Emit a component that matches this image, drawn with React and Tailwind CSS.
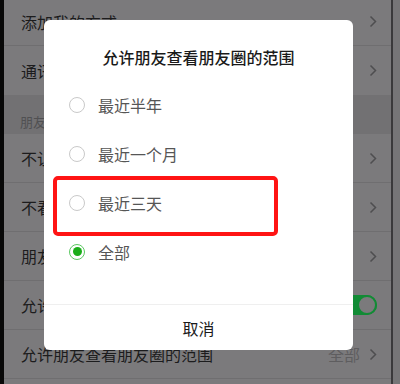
import React from "react";

const Chevron = () => (
  <svg width="8" height="13" viewBox="0 0 8 13" className="shrink-0">
    <polyline points="1.5,1.5 6.5,6.5 1.5,11.5" fill="none" stroke="#4e4e50" strokeWidth="1.5" />
  </svg>
);

const Row = ({ label, right, h = "h-[49px]", border = true }) => (
  <div className={`${h} flex items-center justify-between pl-[17px] pr-[14px] ${border ? "border-b border-[#6f6e70]" : ""}`}>
    <span className="text-[16px] text-[#1c1c1d] leading-none">{label}</span>
    {right}
  </div>
);

const Radio = ({ checked }) =>
  checked ? (
    <span className="w-[16px] h-[16px] rounded-full border-[1.5px] border-[#5cc862] flex items-center justify-center shrink-0">
      <span className="w-[9px] h-[9px] rounded-full bg-[#1aad19]" />
    </span>
  ) : (
    <span className="w-[16px] h-[16px] rounded-full border-[1.5px] border-[#c9c9c9] shrink-0" />
  );

export default function App() {
  const options = [
    { label: "最近半年" },
    { label: "最近一个月" },
    { label: "最近三天" },
    { label: "全部", checked: true },
  ];
  return (
    <div
      className="relative w-[400px] h-[384px] overflow-hidden flex bg-[#7b7a7c]"
      style={{ fontFamily: '"Noto Sans CJK SC", "Noto Sans", sans-serif' }}
    >
      <div className="w-[4px] h-full bg-[#080808] shrink-0" />
      <div className="flex-1 flex flex-col">
        <Row label="添加我的方式" h="h-[46px] pb-[2px]" right={<Chevron />} />
        <Row label="通讯录黑名单" right={<Chevron />} border={false} />
        <div className="h-[39px] bg-[#727173] flex items-end pl-[16px] pb-[6px]">
          <span className="text-[13px] text-[#505052] leading-none">朋友圈和视频动态</span>
        </div>
        <Row label="不让他（她）看" right={<Chevron />} />
        <Row label="不看他（她）" right={<Chevron />} />
        <Row label="朋友圈更新提醒" right={<Chevron />} />
        <Row
          label="允许陌生人查看十条朋友圈"
          right={
            <div className="w-[50px] h-[20px] rounded-full bg-[#128b35] flex items-center justify-end">
              <span className="w-[20px] h-[20px] rounded-full bg-[#7b7a7c] border-[2px] border-[#128b35]" />
            </div>
          }
        />
        <Row
          label="允许朋友查看朋友圈的范围"
          right={
            <div className="flex items-center gap-[9px]">
              <span className="text-[16px] text-[#5e5d5f] leading-none">全部</span>
              <Chevron />
            </div>
          }
        />
      </div>
      <div className="w-[2px] h-full bg-[#3a393b] shrink-0" />
      <div className="w-[7px] h-full bg-[#767577] shrink-0" />

      {/* Dialog */}
      <div className="absolute left-[44px] top-[20px] w-[309px] h-[330px] bg-white rounded-[6px] flex flex-col">
        <div className="h-[60px] flex items-start justify-center pt-[29px]">
          <span className="text-[16px] font-medium text-[#1a1a1a] leading-none">允许朋友查看朋友圈的范围</span>
        </div>
        <div className="flex flex-col">
          {options.map((o) => (
            <div key={o.label} className="h-[49px] flex items-center pl-[25px] gap-[13px]">
              <Radio checked={o.checked} />
              <span className="text-[16px] text-[#565656] leading-none">{o.label}</span>
            </div>
          ))}
        </div>
        <div className="flex-1" />
        <div className="h-[46px] border-t border-[#efefef] flex items-center justify-center">
          <span className="text-[16px] text-[#1a1a1a] leading-none">取消</span>
        </div>
      </div>

      {/* Red highlight */}
      <div className="absolute left-[53px] top-[176px] w-[225px] h-[60px] border-[4px] border-[#ff1414] rounded-[5px]" />
    </div>
  );
}
